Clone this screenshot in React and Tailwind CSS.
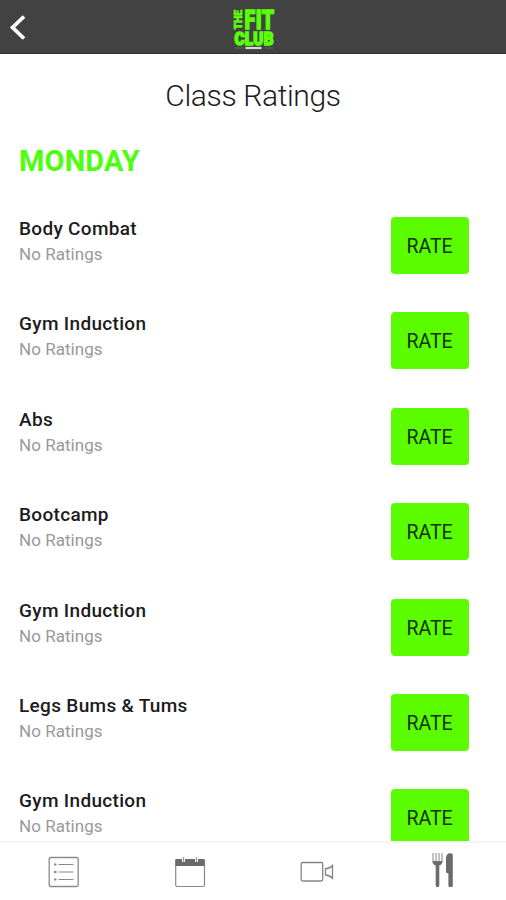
const classes = [
  "Body Combat",
  "Gym Induction",
  "Abs",
  "Bootcamp",
  "Gym Induction",
  "Legs Bums & Tums",
  "Gym Induction",
];

const Logo = () => (
  <svg width="44" height="46" viewBox="0 0 44 46" className="block overflow-visible" fontFamily="Roboto, sans-serif" fontWeight="900" fill="#5cff0a" stroke="#5cff0a">
    <text transform="translate(10 24.5) rotate(-90)" fontSize="11" textLength="19.5" lengthAdjust="spacingAndGlyphs" strokeWidth="0.6">THE</text>
    <text x="12.5" y="23.5" fontSize="25.5" letterSpacing="0.6" textLength="30" lengthAdjust="spacingAndGlyphs" strokeWidth="1.4">FIT</text>
    <text x="2.5" y="39.5" fontSize="17.5" letterSpacing="0.4" textLength="39.5" lengthAdjust="spacingAndGlyphs" strokeWidth="1.5">CLUB</text>
    <path d="M3 43h9M33 43h8" stroke="#4b7a35" strokeWidth="1" />
    <path d="M13.5 43h16" stroke="#d8d8d8" strokeWidth="2.2" />
  </svg>
);

const Header = () => (
  <header className="relative flex h-[54px] shrink-0 justify-center border-b border-[#333] bg-[#424242] pt-[5px]">
    <button className="absolute left-[9px] top-[14px]" aria-label="Back">
      <svg width="18" height="28" viewBox="0 0 18 28" fill="none" stroke="#fff" strokeWidth="3.8">
        <path d="M15 2.5 3.6 13.5 15 24.5" />
      </svg>
    </button>
    <div className="ml-[2px]"><Logo /></div>
  </header>
);

const ClassRow = ({ name }) => (
  <li className="flex h-[95.4px] items-start justify-between pl-[19px] pr-[37.5px]">
    <div>
      <h3 className="text-[19px] leading-6 font-medium tracking-[0.32px] text-[#1c1c1c]">{name}</h3>
      <p className="text-[17px] leading-[26px] tracking-[0.05px] text-[#999]">No Ratings</p>
    </div>
    <button className="h-[57px] w-[78px] rounded bg-[#5cfc00] pt-[2px] text-[19.5px] text-[#123000]">RATE</button>
  </li>
);

const ListIcon = () => (
  <svg width="32" height="32" viewBox="0 0 32 32" fill="none" stroke="#8a8a8a">
    <rect x="1.2" y="1.5" width="29" height="29" rx="1.5" strokeWidth="1.3" />
    <path d="M10.5 8.5h15M10.5 16h15M10.5 23.5h15" strokeWidth="1.2" />
    <path d="M6 8.5h2.5M6 16h2.5M6 23.5h2.5" strokeWidth="2" />
  </svg>
);

const CalendarIcon = () => (
  <svg width="32" height="32" viewBox="0 0 32 32" fill="none" stroke="#8a8a8a">
    <rect x="1.7" y="3.5" width="28.8" height="27" rx="1.5" strokeWidth="1.2" />
    <path d="M1.5 3h29v7h-29z" fill="#6b6b6b" stroke="none" />
    <path d="M9.5 1v5M22.5 1v5" stroke="#fff" strokeWidth="3" />
    <path d="M9.5 1v5M22.5 1v5" stroke="#999" strokeWidth="1.2" />
  </svg>
);

const VideoIcon = () => (
  <svg width="34" height="22" viewBox="0 0 34 22" fill="none" stroke="#858585" strokeWidth="1.3">
    <rect x="1.2" y="1.5" width="21.5" height="18.5" rx="1.5" />
    <path d="M25.5 7.7Q30 7.5 32.5 4.5v12.8Q30 14.3 25.5 14z" />
  </svg>
);

const CutleryIcon = () => (
  <svg width="22" height="36" viewBox="0 0 22 36" fill="#6b6b6b">
    <path d="M.5 9h10c0 2.5-1.2 4-3.2 4.5v20c0 2-3.6 2-3.6 0v-20C1.7 13 .5 11.5.5 9z" />
    <path d="M1 1v9M4 1v9M7 1v9M10 1v9" stroke="#858585" strokeWidth="1" />
    <path d="M14 20.5V7c0-4 1.6-5.7 4.2-5.7 1.8 0 2.6.8 2.6 2.2v30c0 2-4.4 2-4.4 0v-12z" />
  </svg>
);

const TabBar = () => (
  <nav className="grid h-[59px] shrink-0 grid-cols-4 place-items-center border-t-2 border-[#f5f5f5] bg-white pl-px">
    <ListIcon />
    <CalendarIcon />
    <VideoIcon />
    <div className="-mt-1 ml-px"><CutleryIcon /></div>
  </nav>
);

export default function App() {
  return (
    <div className="flex h-[900px] w-[506px] flex-col overflow-hidden bg-white font-['Roboto',sans-serif]">
      <Header />
      <main className="min-h-0 flex-1 overflow-hidden">
        <h1 className="mt-[22px] text-center text-[30px] leading-10 font-light tracking-[-0.35px] text-[#1c1c1c]">Class Ratings</h1>
        <h2 className="mt-[27px] pl-[19px] text-[29px] leading-9 font-bold tracking-[0.15px] text-[#4dff0d]">MONDAY</h2>
        <ul className="mt-[38.1px]">
          {classes.map((name, i) => <ClassRow key={i} name={name} />)}
        </ul>
      </main>
      <TabBar />
    </div>
  );
}
